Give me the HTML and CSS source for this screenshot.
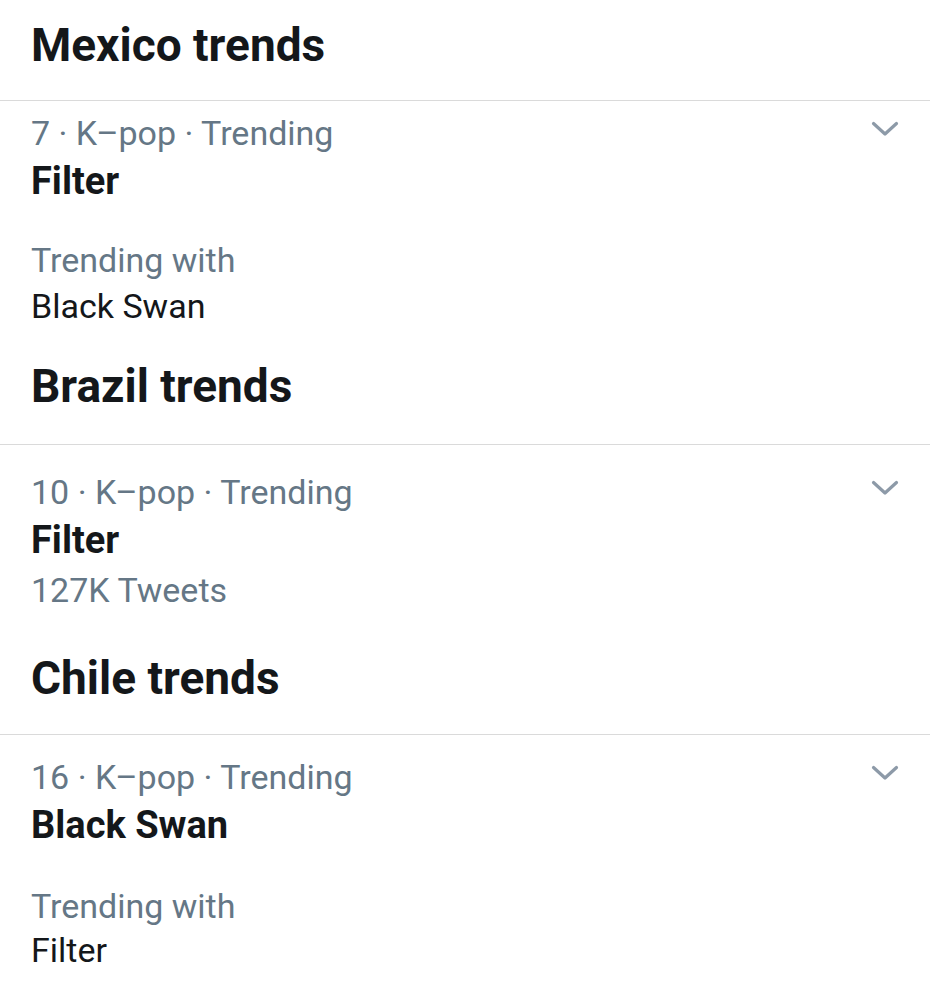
FILE: index.html
```html
<!DOCTYPE html>
<html lang="en">
<head>
<meta charset="utf-8">
<title>Trends</title>
<link rel="stylesheet" href="styles.css">
</head>
<body>
<main class="trends">
  <section class="region region--mexico">
    <h2 class="region-title">Mexico trends</h2>
    <div class="trend trend--first">
      <div class="trend-head">
        <span class="trend-meta">7 · K–pop · Trending</span>
        <svg class="chevron" viewBox="0 0 28 16" width="28" height="16" aria-hidden="true"><path d="M2.5 2.5 L14 13 L25.5 2.5"/></svg>
      </div>
      <div class="trend-name">Filter</div>
      <div class="trend-with">
        <div class="trend-with-label">Trending with</div>
        <div class="trend-with-value">Black Swan</div>
      </div>
    </div>
  </section>
  <section class="region region--brazil">
    <h2 class="region-title">Brazil trends</h2>
    <div class="trend trend--second">
      <div class="trend-head">
        <span class="trend-meta">10 · K–pop · Trending</span>
        <svg class="chevron" viewBox="0 0 28 16" width="28" height="16" aria-hidden="true"><path d="M2.5 2.5 L14 13 L25.5 2.5"/></svg>
      </div>
      <div class="trend-name">Filter</div>
      <div class="trend-count">127K Tweets</div>
    </div>
  </section>
  <section class="region region--chile">
    <h2 class="region-title">Chile trends</h2>
    <div class="trend trend--third">
      <div class="trend-head">
        <span class="trend-meta">16 · K–pop · Trending</span>
        <svg class="chevron" viewBox="0 0 28 16" width="28" height="16" aria-hidden="true"><path d="M2.5 2.5 L14 13 L25.5 2.5"/></svg>
      </div>
      <div class="trend-name">Black Swan</div>
      <div class="trend-with trend-with--last">
        <div class="trend-with-label">Trending with</div>
        <div class="trend-with-value">Filter</div>
      </div>
    </div>
  </section>
</main>
</body>
</html>
```

FILE: styles.css
```css
html, body {
  margin: 0;
  padding: 0;
  background: #ffffff;
}

body {
  font-family: Roboto, "Liberation Sans", Arial, sans-serif;
  color: #14171a;
  overflow: hidden;
}

.trends {
  display: flex;
  flex-direction: column;
}

.region-title {
  margin: 0;
  padding: 0 31px 29px;
  font-size: 46px;
  line-height: 56px;
  font-weight: 700;
  border-bottom: 1px solid #dadada;
}

.region--mexico .region-title { padding-top: 17px; padding-bottom: 27px; }
.region--brazil .region-title { padding-top: 32px; padding-bottom: 30px; }
.region--chile .region-title { padding-top: 40px; padding-bottom: 28px; }

.trend {
  padding: 0 31px 0 31px;
}

.trend--first { padding-top: 12px; }
.trend--second { padding-top: 27px; }
.trend--third { padding-top: 22px; }

.trend-head {
  display: flex;
  justify-content: space-between;
  align-items: flex-start;
}

.trend-meta,
.trend-count,
.trend-with-label {
  font-size: 34px;
  line-height: 40px;
  color: #657786;
  font-weight: 400;
}

.chevron {
  margin-top: 8px;
  margin-right: 0;
  fill: none;
  stroke: #8d9aa8;
  stroke-width: 3.2;
  stroke-linecap: round;
  stroke-linejoin: round;
}

.trend-name {
  margin-top: 6px;
  font-size: 38px;
  line-height: 44px;
  font-weight: 700;
}

.trend-count {
  margin-top: 8px;
}

.trend-with {
  margin-top: 37px;
}

.trend-with--last {
  margin-top: 39px;
}

.trend-with-value {
  margin-top: 6px;
  font-size: 34px;
  line-height: 40px;
  font-weight: 400;
}

.trend-with--last .trend-with-value {
  margin-top: 4px;
}
```
